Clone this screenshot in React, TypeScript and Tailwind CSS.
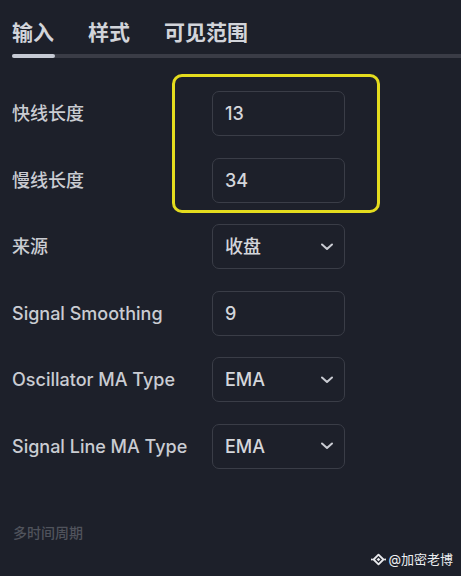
import React from 'react';

const FONT = { fontFamily: 'Inter, "Noto Sans CJK SC", sans-serif' };

type Row = { label: string; value: string; select?: boolean };

const ROWS: Row[] = [
  { label: '快线长度', value: '13' },
  { label: '慢线长度', value: '34' },
  { label: '来源', value: '收盘', select: true },
  { label: 'Signal Smoothing', value: '9' },
  { label: 'Oscillator MA Type', value: 'EMA', select: true },
  { label: 'Signal Line MA Type', value: 'EMA', select: true },
];

const Chevron: React.FC = () => (
  <svg width="14" height="8" viewBox="0 0 14 8" fill="none">
    <path d="M2 1.5 7 6l5-4.5" stroke="#c9cbd2" strokeWidth="2" strokeLinecap="round" strokeLinejoin="round" />
  </svg>
);

const Logo: React.FC = () => (
  <svg width="15" height="15" viewBox="0 0 16 16" fill="none">
    <path d="M8 2.8 13.2 8 8 13.2 2.8 8Z" stroke="#e8e9ec" strokeWidth="2" strokeLinejoin="round" />
    <rect x="6.6" y="6.6" width="2.8" height="2.8" transform="rotate(45 8 8)" fill="#e8e9ec" />
    <rect x="0" y="7" width="2" height="2" transform="rotate(45 1 8)" fill="#e8e9ec" />
    <rect x="14" y="7" width="2" height="2" transform="rotate(45 15 8)" fill="#e8e9ec" />
  </svg>
);

const Field: React.FC<{ row: Row }> = ({ row }) => (
  <div className="flex items-center h-[45px]">
    <div className="w-[200px] text-[18px] font-medium text-[#caccd2]">{row.label}</div>
    <div className="w-[133px] h-[45px] rounded-[7px] border border-[#3a3d47] flex items-center justify-between pl-3 pr-[10px] text-[18px] font-medium text-[#d4d6db]">
      <span>{row.value}</span>
      {row.select && <Chevron />}
    </div>
  </div>
);

const App: React.FC = () => {
  return (
    <div className="relative w-[461px] h-[576px] overflow-hidden bg-[#1d202a]" style={FONT}>
      <div className="flex gap-[34px] pl-3 pt-[20px] text-[21px] font-semibold text-[#d2d4da] leading-[26px]">
        <span>输入</span>
        <span>样式</span>
        <span>可见范围</span>
      </div>
      <div className="ml-3 mt-[8px] h-[4px] rounded-l-full bg-[#3a3c46] flex">
        <div className="w-[43px] h-full rounded-full bg-[#c6cad4]" />
      </div>
      <div className="flex flex-col gap-[21.6px] pl-3 mt-[33px]">
        {ROWS.map((r) => (
          <Field key={r.label} row={r} />
        ))}
      </div>
      <div className="pl-[13px] mt-[53px] text-[14px] font-medium text-[#50535c]">多时间周期</div>

      {/* highlight annotation */}
      <div className="absolute left-[172px] top-[74px] w-[208px] h-[139px] rounded-[10px] border-[3px] border-[#e4dc1e]" />

      {/* watermark */}
      <div className="absolute right-[8px] top-[550px] flex items-center gap-[2px] text-[13px] text-[#eceef1]">
        <Logo />
        <span>@加密老博</span>
      </div>
    </div>
  );
};

export default App;
